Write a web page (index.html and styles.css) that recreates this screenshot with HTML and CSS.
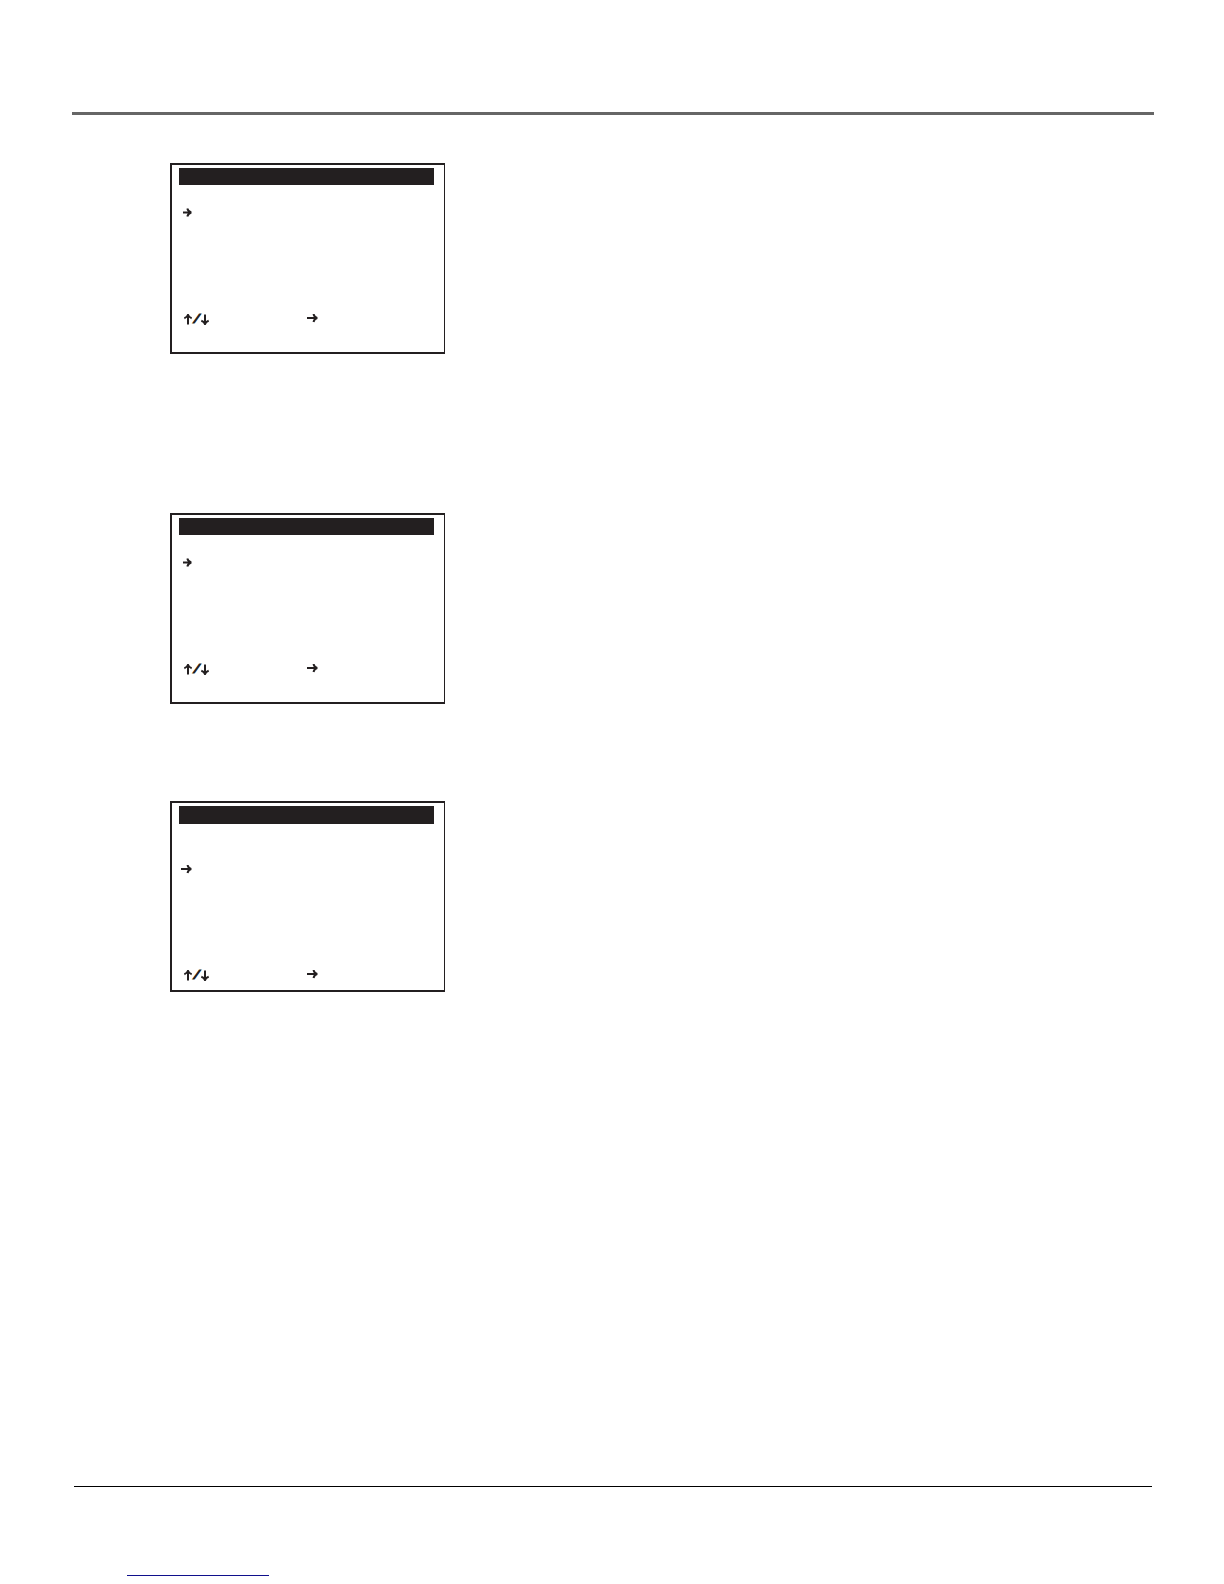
FILE: index.html
```html
<!DOCTYPE html>
<html lang="en">
<head>
    <meta charset="UTF-8">
    <meta name="viewport" content="width=device-width, initial-scale=1.0">
    <title>Menu Screens</title>
    <link rel="stylesheet" href="styles.css">
</head>
<body>
    <!-- Shared arrow shapes -->
    <svg class="symbols" aria-hidden="true">
        <symbol id="arrow-right" viewBox="0 0 11 9">
            <path d="M0 4H10M6.5 0C7.1 2.4 8.3 3.6 10.3 4C8.3 4.4 7.1 5.6 6.5 8"/>
        </symbol>
        <symbol id="arrow-right-short" viewBox="0 0 11 9">
            <path d="M2 4.5H10M6.3 0.5C7 2.8 8.3 4 10.3 4.5C8.3 5 7 6.2 6.3 8.5"/>
        </symbol>
        <symbol id="arrow-up" viewBox="0 0 8 11">
            <path d="M4 10.5V1M0.3 4.2C2.4 3.5 3.5 2.5 4 0.8C4.5 2.5 5.6 3.5 7.7 4.2"/>
        </symbol>
        <symbol id="arrow-down" viewBox="0 0 8 11">
            <path d="M4 0.5V10M0.3 6.8C2.4 7.5 3.5 8.5 4 10.2C4.5 8.5 5.6 7.5 7.7 6.8"/>
        </symbol>
    </svg>

    <header class="page-header"></header>

    <main class="content">
        <section class="screen screen-first">
            <div class="screen-title"></div>
            <div class="screen-item">
                <svg class="arrow"><use href="#arrow-right-short"/></svg>
            </div>
            <div class="screen-keys">
                <div class="updown">
                    <svg class="arrow-v"><use href="#arrow-up"/></svg>
                    <span class="slash">/</span>
                    <svg class="arrow-v"><use href="#arrow-down"/></svg>
                </div>
                <svg class="arrow"><use href="#arrow-right"/></svg>
            </div>
        </section>

        <section class="screen">
            <div class="screen-title"></div>
            <div class="screen-item">
                <svg class="arrow"><use href="#arrow-right-short"/></svg>
            </div>
            <div class="screen-keys">
                <div class="updown">
                    <svg class="arrow-v"><use href="#arrow-up"/></svg>
                    <span class="slash">/</span>
                    <svg class="arrow-v"><use href="#arrow-down"/></svg>
                </div>
                <svg class="arrow"><use href="#arrow-right"/></svg>
            </div>
        </section>

        <section class="screen screen-low">
            <div class="screen-title"></div>
            <div class="screen-item">
                <svg class="arrow"><use href="#arrow-right"/></svg>
            </div>
            <div class="screen-keys">
                <div class="updown">
                    <svg class="arrow-v"><use href="#arrow-up"/></svg>
                    <span class="slash">/</span>
                    <svg class="arrow-v"><use href="#arrow-down"/></svg>
                </div>
                <svg class="arrow"><use href="#arrow-right"/></svg>
            </div>
        </section>
    </main>

    <footer class="page-footer">
        <a class="footer-link" href="#" aria-label="Home"></a>
    </footer>
</body>
</html>
```
FILE: styles.css
```css
* {
    box-sizing: border-box;
}

body {
    display: flex;
    flex-direction: column;
    min-height: 100vh;
    margin: 0;
    padding: 0 70px 0 72px;
    font-family: "Liberation Sans", Arial, sans-serif;
    background: #fff;
    color: #231f20;
}

.symbols {
    display: none;
}

.page-header {
    padding-top: 112px;
    border-bottom: 3px solid #666;
}

.content {
    padding: 48px 98px;
}

/* Menu screens */
.screen {
    max-width: 275px;
    margin-bottom: 97px;
    padding: 3px 10px 27px 7px;
    border: 2px solid #231f20;
    border-right-width: 1px;
}

.screen-first {
    margin-bottom: 159px;
}

.screen-title {
    height: 17px;
    background: #231f20;
}

.screen-item {
    display: flex;
    margin: 23px 0 97px;
    padding-left: 2px;
}

.screen-keys {
    display: grid;
    grid-template-columns: 123px 1fr;
    align-items: start;
    padding-left: 5px;
}

.screen-low {
    margin-bottom: 0;
    padding-bottom: 9px;
}

.screen-low .screen-title {
    height: 18px;
}

.screen-low .screen-item {
    margin: 41px 0 96px;
}

.updown {
    display: flex;
    height: 11px;
}

.slash {
    width: 9px;
    font-family: "Liberation Mono", "Courier New", monospace;
    font-size: 12px;
    font-style: italic;
    font-weight: bold;
    line-height: 12px;
    text-align: center;
    -webkit-text-stroke: 1px #231f20;
}

.arrow,
.arrow-v {
    display: block;
    overflow: visible;
    fill: none;
    stroke: #231f20;
    stroke-width: 2;
}

.arrow {
    width: 11px;
    height: 9px;
}

.arrow-v {
    width: 8px;
    height: 11px;
}

/* Footer */
.page-footer {
    margin: auto 2px 0;
    padding: 88px 53px 8px;
    border-top: 1px solid #000;
}

.footer-link {
    display: block;
    max-width: 142px;
    border-bottom: 1px solid #10108c;
}
```
